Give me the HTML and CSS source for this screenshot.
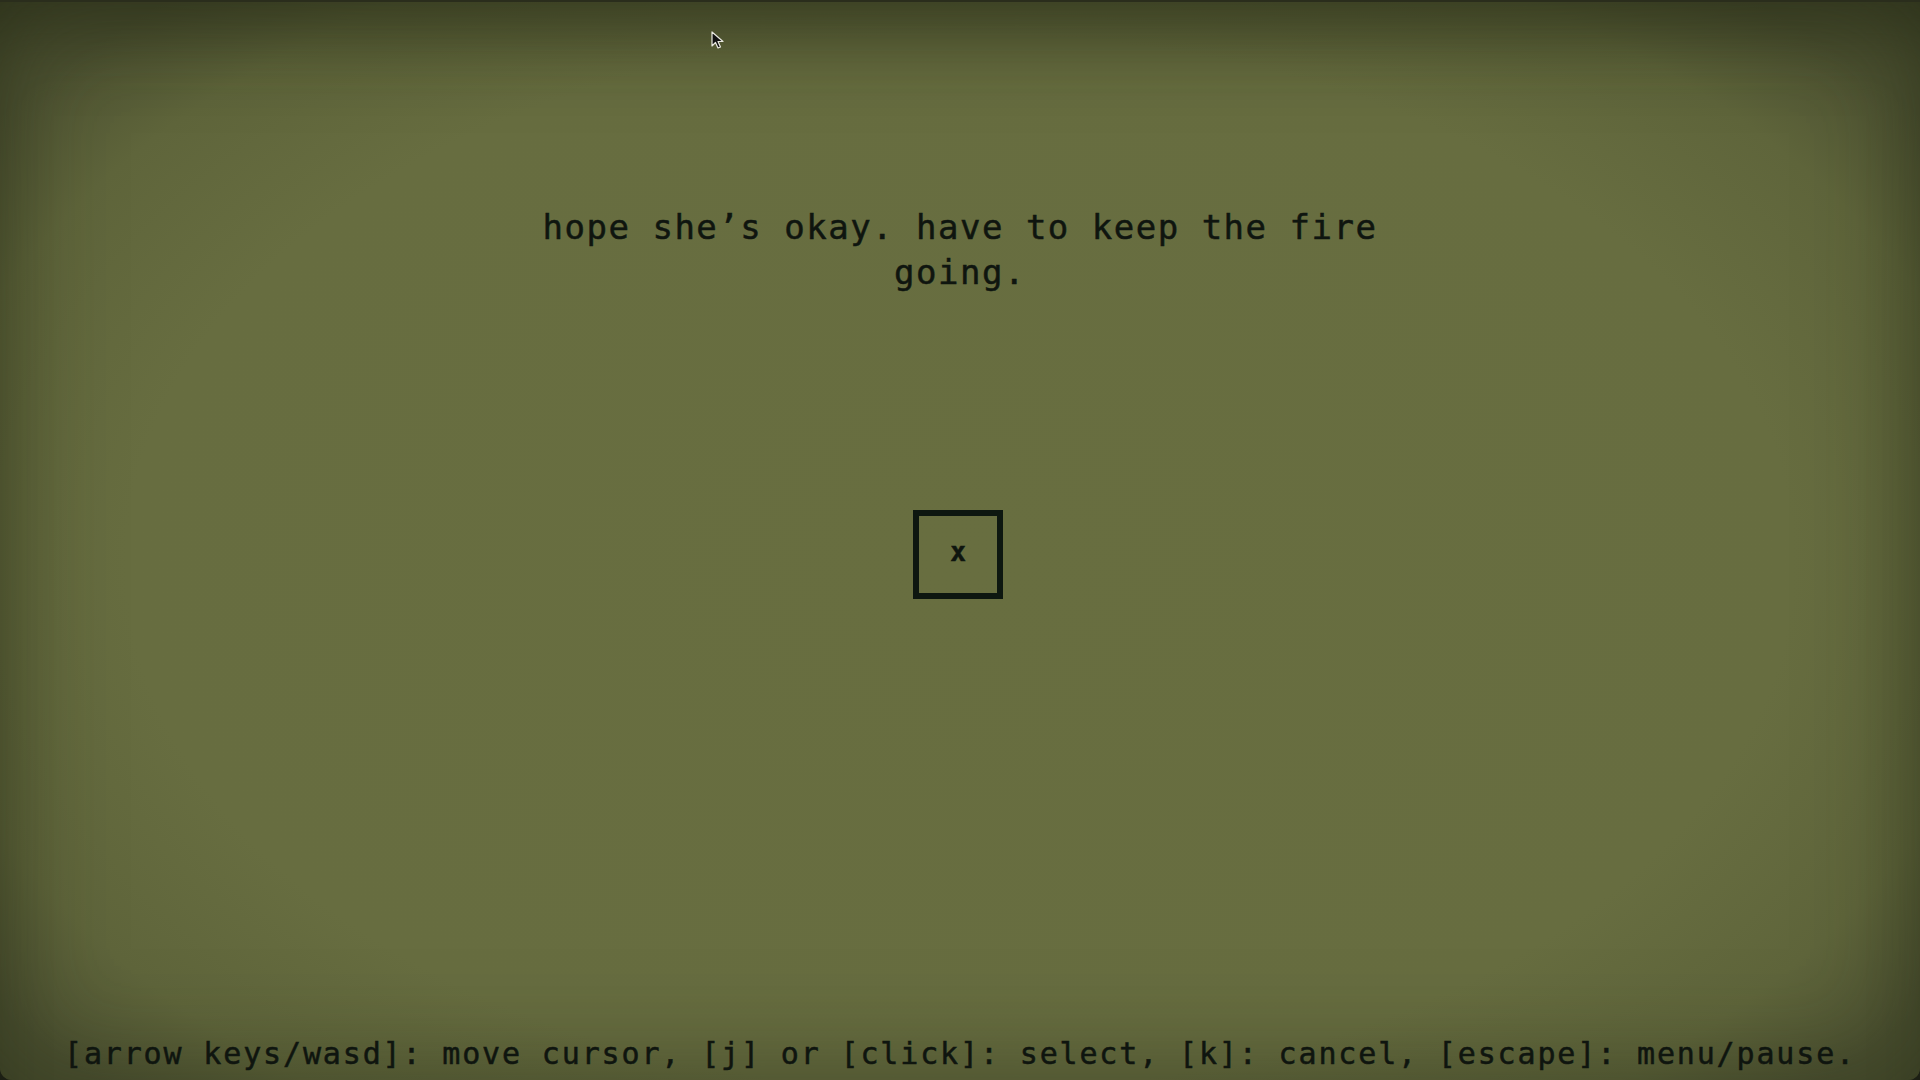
FILE: index.html
```html
<!DOCTYPE html>
<html>
<head>
<meta charset="utf-8">
<link rel="stylesheet" href="styles.css">
</head>
<body>
<div class="screen">
  <div class="dialog">
    <p class="line">hope she’s okay. have to keep the fire</p>
    <p class="line">going.</p>
  </div>
  <div class="slot"><span class="mark">x</span></div>
  <p class="hint">[arrow keys/wasd]: move cursor, [j] or [click]: select, [k]: cancel, [escape]: menu/pause.</p>
  <svg class="pointer" width="14" height="20" viewBox="0 0 14 20">
    <path d="M1 1 L1 15 L4.5 11.5 L7 17 L9.5 16 L7 10.5 L12 10.5 Z" fill="#111" stroke="#e8e8e0" stroke-width="1.2" stroke-linejoin="round"/>
  </svg>
</div>
</body>
</html>
```
FILE: styles.css
```css
html, body {
  margin: 0;
  padding: 0;
  width: 1920px;
  height: 1080px;
  overflow: hidden;
  background: #1c1f14;
}
.screen {
  position: relative;
  box-sizing: border-box;
  width: 1920px;
  height: 1080px;
  border-top: 2px solid #2a2d1c;
  border-radius: 0 0 12px 12px;
  background: radial-gradient(ellipse 62% 70% at 50% 52%, #686e40 0%, #676d40 70%, #5f653b 88%, #4f5433 100%);
  box-shadow: inset 0 0 110px rgba(35, 40, 20, 0.55), inset 0 60px 70px -30px rgba(35, 40, 20, 0.5);
  display: flex;
  flex-direction: column;
  align-items: center;
  font-family: "DejaVu Sans Mono", "Liberation Mono", monospace;
  color: #0f150f;
  -webkit-text-stroke: 0.5px #0f150f;
}
.dialog {
  margin-top: 203px;
  text-align: center;
}
.line {
  margin: 0;
  font-size: 34px;
  line-height: 45px;
  letter-spacing: 1.5px;
  white-space: pre;
}
.slot {
  margin-top: 215px;
  box-sizing: border-box;
  width: 90px;
  height: 89px;
  margin-left: -4px;
  border: 6px solid #0e1710;
  display: flex;
  align-items: center;
  justify-content: center;
}
.mark {
  font-size: 26px;
  font-weight: bold;
  line-height: 1;
  margin-top: -6px;
}
.hint {
  margin: auto 0 8px 0;
  font-size: 30px;
  line-height: 36px;
  letter-spacing: 1.85px;
  white-space: pre;
}
.pointer {
  position: absolute;
  left: 711px;
  top: 29px;
}
```
